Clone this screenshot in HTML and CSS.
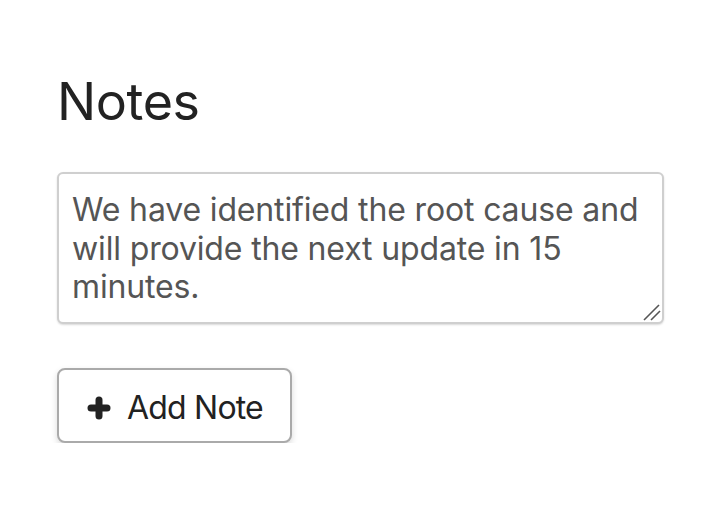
FILE: index.html
```html
<!DOCTYPE html>
<html lang="en">
<head>
    <meta charset="UTF-8">
    <meta name="viewport" content="width=device-width, initial-scale=1.0">
    <title>Notes</title>
    <link rel="stylesheet" href="styles.css">
</head>
<body>
    <section class="notes">
        <h1 class="notes-title">Notes</h1>
        <div class="note-field">
            <textarea class="note-input" rows="3">We have identified the root cause and will provide the next update in 15 minutes.</textarea>
            <svg class="grip" width="18" height="18" viewBox="0 0 18 18" aria-hidden="true">
                <line x1="1" y1="17" x2="16" y2="2" />
                <line x1="8" y1="17" x2="17" y2="8" />
            </svg>
        </div>
        <div>
            <button class="add-btn" type="button">
                <svg class="plus" width="24" height="24" viewBox="0 0 24 24" aria-hidden="true">
                    <line x1="12" y1="4" x2="12" y2="20" />
                    <line x1="4" y1="12" x2="20" y2="12" />
                </svg>
                <span>Add Note</span>
            </button>
        </div>
    </section>
</body>
</html>
```

FILE: styles.css
```css
* {
    box-sizing: border-box;
    padding: 0;
    margin: 0;
}

:root {
    --bg-color: white;
    --color-title: #222;
    --color-text: #555;
    --color-border-input: #cfcfcf;
    --color-border-btn: #aaa;
    --color-shadow: rgba(0, 0, 0, 0.15);
}

body {
    background-color: var(--bg-color);
    font-family: Inter, "Noto Sans", sans-serif;
}

.notes {
    display: flex;
    flex-direction: column;
    gap: 44px;
    padding: 76px 56px 0 57px;
}

.notes-title {
    font-size: 52px;
    font-weight: 400;
    line-height: 1;
    letter-spacing: -0.4px;
    color: var(--color-title);
}

.note-field {
    position: relative;
    width: 607px;
}

.note-input {
    display: block;
    width: 100%;
    height: 152px;
    padding: 17px 13px 0;
    border: 2px solid var(--color-border-input);
    border-radius: 6px;
    font-family: inherit;
    font-size: 32px;
    line-height: 38.5px;
    letter-spacing: -0.15px;
    color: var(--color-text);
    resize: none;
    box-shadow: 0 1px 2px var(--color-shadow);
    outline: none;
}

.grip {
    position: absolute;
    right: 3px;
    bottom: 3px;
    stroke: #555;
    stroke-width: 1.6;
}

.add-btn {
    display: inline-flex;
    align-items: center;
    gap: 16px;
    height: 75px;
    padding: 5px 27px 0 28px;
    border: 2px solid var(--color-border-btn);
    border-radius: 8px;
    background-color: var(--bg-color);
    color: var(--color-title);
    font-family: inherit;
    font-size: 32px;
    line-height: 38.4px;
    letter-spacing: -0.8px;
    box-shadow: 0 3px 6px var(--color-shadow);
}

.plus {
    stroke: var(--color-title);
    stroke-width: 7;
    stroke-linecap: round;
}
```
